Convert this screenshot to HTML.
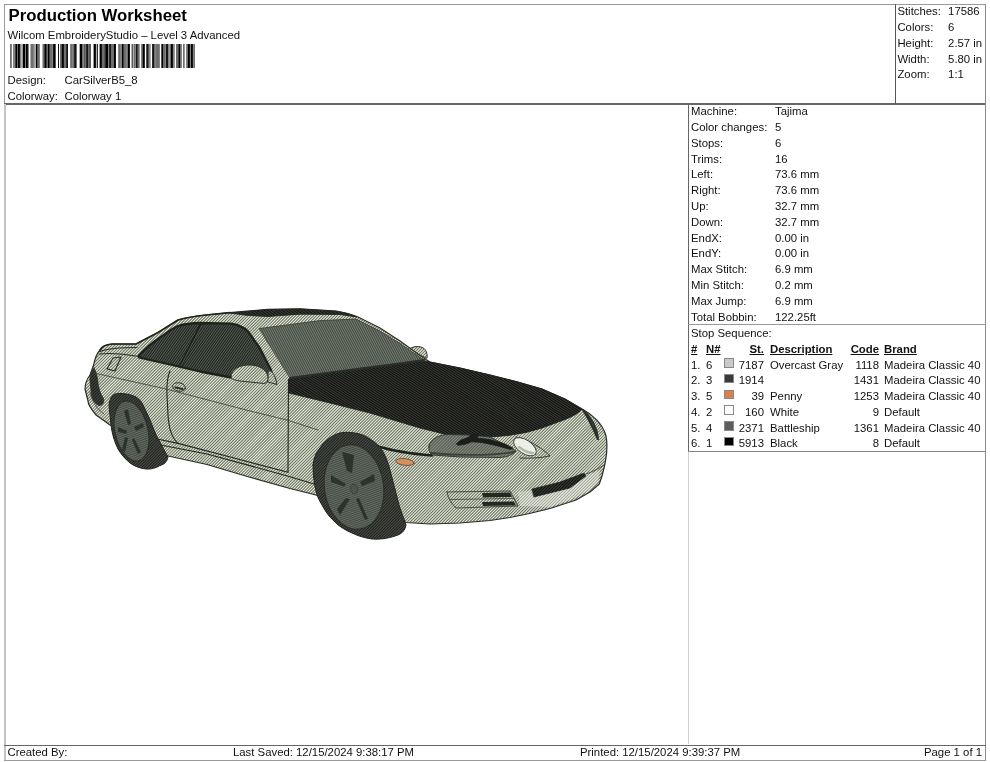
<!DOCTYPE html>
<html><head><meta charset="utf-8">
<style>
html,body{margin:0;padding:0;background:#fff;}
body{width:990px;height:762px;position:relative;overflow:hidden;font-family:"Liberation Sans",sans-serif;color:#111;font-size:11.35px;}
.ln{position:absolute;background:#777;}
.t{position:absolute;white-space:nowrap;line-height:14px;}
.r{text-align:right;}
h1{position:absolute;left:8.5px;top:6px;margin:0;font-size:16.75px;line-height:20px;font-weight:bold;color:#000;white-space:nowrap;}
.u{text-decoration:underline;font-weight:bold;}
.sw{position:absolute;width:10px;height:9.5px;border:1px solid #888;box-sizing:border-box;}
.bc{position:absolute;left:0;top:44px;height:23.5px;width:200px;}
.bc i{position:absolute;top:0;width:1px;height:23.5px;display:block;}
svg.car{position:absolute;left:0;top:0;}
</style></head><body>
<!-- frame lines -->
<div class="ln" style="left:4px;top:4px;width:982px;height:1px;background:#999"></div>
<div class="ln" style="left:4px;top:4px;width:1px;height:100px;background:#999"></div>
<div class="ln" style="left:4px;top:103px;width:982px;height:2px;background:#666"></div>
<div class="ln" style="left:895px;top:4px;width:1px;height:100px;background:#555"></div>
<div class="ln" style="left:985px;top:4px;width:1px;height:100px;background:#888"></div>
<div class="ln" style="left:4px;top:104px;width:2px;height:657px;background:#c4c4c4"></div>
<div class="ln" style="left:985px;top:104px;width:1px;height:657px;background:#8c8c8c"></div>
<div class="ln" style="left:688px;top:104px;width:1px;height:348px;background:#666"></div>
<div class="ln" style="left:688px;top:452px;width:1px;height:292px;background:#d0d0d0"></div>
<div class="ln" style="left:688px;top:324px;width:298px;height:1px;background:#999"></div>
<div class="ln" style="left:688px;top:451px;width:298px;height:1px;background:#888"></div>
<div class="ln" style="left:4px;top:744.5px;width:982px;height:1px;background:#666"></div>
<div class="ln" style="left:4px;top:760px;width:982px;height:1px;background:#999"></div>

<div id="tx" style="position:absolute;left:0;top:0;width:990px;height:762px;will-change:transform;">
<h1>Production Worksheet</h1>
<div class="t" style="left:7.5px;top:27.5px">Wilcom EmbroideryStudio – Level 3 Advanced</div>
<div class="bc"><i style="left:10px;background:rgb(110,110,110)"></i><i style="left:11px;background:rgb(132,132,132)"></i><i style="left:13px;background:rgb(132,132,132)"></i><i style="left:14px;background:rgb(132,132,132)"></i><i style="left:15px;background:rgb(66,66,66)"></i><i style="left:16px;background:rgb(0,0,0)"></i><i style="left:17px;background:rgb(110,110,110)"></i><i style="left:18px;background:rgb(0,0,0)"></i><i style="left:19px;background:rgb(22,22,22)"></i><i style="left:20px;background:rgb(132,132,132)"></i><i style="left:21px;background:rgb(176,176,176)"></i><i style="left:22px;background:rgb(154,154,154)"></i><i style="left:23px;background:rgb(0,0,0)"></i><i style="left:24px;background:rgb(0,0,0)"></i><i style="left:25px;background:rgb(132,132,132)"></i><i style="left:26px;background:rgb(0,0,0)"></i><i style="left:27px;background:rgb(22,22,22)"></i><i style="left:28px;background:rgb(132,132,132)"></i><i style="left:30px;background:rgb(176,176,176)"></i><i style="left:31px;background:rgb(110,110,110)"></i><i style="left:32px;background:rgb(110,110,110)"></i><i style="left:33px;background:rgb(132,132,132)"></i><i style="left:34px;background:rgb(154,154,154)"></i><i style="left:35px;background:rgb(176,176,176)"></i><i style="left:36px;background:rgb(0,0,0)"></i><i style="left:37px;background:rgb(88,88,88)"></i><i style="left:38px;background:rgb(110,110,110)"></i><i style="left:39px;background:rgb(132,132,132)"></i><i style="left:42px;background:rgb(176,176,176)"></i><i style="left:43px;background:rgb(110,110,110)"></i><i style="left:44px;background:rgb(66,66,66)"></i><i style="left:45px;background:rgb(0,0,0)"></i><i style="left:46px;background:rgb(66,66,66)"></i><i style="left:47px;background:rgb(110,110,110)"></i><i style="left:48px;background:rgb(0,0,0)"></i><i style="left:49px;background:rgb(66,66,66)"></i><i style="left:50px;background:rgb(110,110,110)"></i><i style="left:51px;background:rgb(110,110,110)"></i><i style="left:52px;background:rgb(132,132,132)"></i><i style="left:53px;background:rgb(22,22,22)"></i><i style="left:54px;background:rgb(0,0,0)"></i><i style="left:55px;background:rgb(88,88,88)"></i><i style="left:58px;background:rgb(22,22,22)"></i><i style="left:60px;background:rgb(110,110,110)"></i><i style="left:61px;background:rgb(88,88,88)"></i><i style="left:62px;background:rgb(0,0,0)"></i><i style="left:63px;background:rgb(22,22,22)"></i><i style="left:64px;background:rgb(110,110,110)"></i><i style="left:65px;background:rgb(110,110,110)"></i><i style="left:66px;background:rgb(44,44,44)"></i><i style="left:67px;background:rgb(22,22,22)"></i><i style="left:70px;background:rgb(132,132,132)"></i><i style="left:71px;background:rgb(110,110,110)"></i><i style="left:72px;background:rgb(132,132,132)"></i><i style="left:73px;background:rgb(110,110,110)"></i><i style="left:74px;background:rgb(44,44,44)"></i><i style="left:75px;background:rgb(22,22,22)"></i><i style="left:76px;background:rgb(110,110,110)"></i><i style="left:79px;background:rgb(176,176,176)"></i><i style="left:80px;background:rgb(0,0,0)"></i><i style="left:81px;background:rgb(0,0,0)"></i><i style="left:82px;background:rgb(110,110,110)"></i><i style="left:83px;background:rgb(132,132,132)"></i><i style="left:84px;background:rgb(88,88,88)"></i><i style="left:85px;background:rgb(110,110,110)"></i><i style="left:86px;background:rgb(44,44,44)"></i><i style="left:87px;background:rgb(22,22,22)"></i><i style="left:88px;background:rgb(110,110,110)"></i><i style="left:89px;background:rgb(88,88,88)"></i><i style="left:90px;background:rgb(88,88,88)"></i><i style="left:93px;background:rgb(154,154,154)"></i><i style="left:94px;background:rgb(0,0,0)"></i><i style="left:95px;background:rgb(22,22,22)"></i><i style="left:96px;background:rgb(176,176,176)"></i><i style="left:97px;background:rgb(44,44,44)"></i><i style="left:99px;background:rgb(154,154,154)"></i><i style="left:100px;background:rgb(0,0,0)"></i><i style="left:101px;background:rgb(22,22,22)"></i><i style="left:102px;background:rgb(110,110,110)"></i><i style="left:103px;background:rgb(110,110,110)"></i><i style="left:104px;background:rgb(88,88,88)"></i><i style="left:105px;background:rgb(44,44,44)"></i><i style="left:106px;background:rgb(0,0,0)"></i><i style="left:107px;background:rgb(0,0,0)"></i><i style="left:108px;background:rgb(132,132,132)"></i><i style="left:109px;background:rgb(44,44,44)"></i><i style="left:110px;background:rgb(22,22,22)"></i><i style="left:111px;background:rgb(110,110,110)"></i><i style="left:112px;background:rgb(110,110,110)"></i><i style="left:113px;background:rgb(110,110,110)"></i><i style="left:114px;background:rgb(0,0,0)"></i><i style="left:115px;background:rgb(22,22,22)"></i><i style="left:118px;background:rgb(132,132,132)"></i><i style="left:119px;background:rgb(110,110,110)"></i><i style="left:120px;background:rgb(132,132,132)"></i><i style="left:121px;background:rgb(132,132,132)"></i><i style="left:122px;background:rgb(0,0,0)"></i><i style="left:123px;background:rgb(66,66,66)"></i><i style="left:124px;background:rgb(110,110,110)"></i><i style="left:125px;background:rgb(110,110,110)"></i><i style="left:126px;background:rgb(132,132,132)"></i><i style="left:127px;background:rgb(110,110,110)"></i><i style="left:128px;background:rgb(0,0,0)"></i><i style="left:129px;background:rgb(22,22,22)"></i><i style="left:131px;background:rgb(176,176,176)"></i><i style="left:132px;background:rgb(88,88,88)"></i><i style="left:133px;background:rgb(176,176,176)"></i><i style="left:134px;background:rgb(110,110,110)"></i><i style="left:135px;background:rgb(132,132,132)"></i><i style="left:136px;background:rgb(22,22,22)"></i><i style="left:137px;background:rgb(66,66,66)"></i><i style="left:138px;background:rgb(110,110,110)"></i><i style="left:139px;background:rgb(154,154,154)"></i><i style="left:141px;background:rgb(132,132,132)"></i><i style="left:142px;background:rgb(88,88,88)"></i><i style="left:143px;background:rgb(0,0,0)"></i><i style="left:144px;background:rgb(44,44,44)"></i><i style="left:146px;background:rgb(88,88,88)"></i><i style="left:147px;background:rgb(22,22,22)"></i><i style="left:148px;background:rgb(88,88,88)"></i><i style="left:149px;background:rgb(132,132,132)"></i><i style="left:150px;background:rgb(176,176,176)"></i><i style="left:152px;background:rgb(44,44,44)"></i><i style="left:153px;background:rgb(22,22,22)"></i><i style="left:154px;background:rgb(110,110,110)"></i><i style="left:155px;background:rgb(132,132,132)"></i><i style="left:156px;background:rgb(110,110,110)"></i><i style="left:157px;background:rgb(110,110,110)"></i><i style="left:158px;background:rgb(110,110,110)"></i><i style="left:159px;background:rgb(132,132,132)"></i><i style="left:161px;background:rgb(88,88,88)"></i><i style="left:162px;background:rgb(0,0,0)"></i><i style="left:163px;background:rgb(110,110,110)"></i><i style="left:164px;background:rgb(110,110,110)"></i><i style="left:165px;background:rgb(132,132,132)"></i><i style="left:166px;background:rgb(22,22,22)"></i><i style="left:167px;background:rgb(22,22,22)"></i><i style="left:168px;background:rgb(132,132,132)"></i><i style="left:169px;background:rgb(154,154,154)"></i><i style="left:170px;background:rgb(110,110,110)"></i><i style="left:171px;background:rgb(0,0,0)"></i><i style="left:172px;background:rgb(22,22,22)"></i><i style="left:173px;background:rgb(132,132,132)"></i><i style="left:174px;background:rgb(154,154,154)"></i><i style="left:176px;background:rgb(110,110,110)"></i><i style="left:177px;background:rgb(110,110,110)"></i><i style="left:178px;background:rgb(66,66,66)"></i><i style="left:179px;background:rgb(0,0,0)"></i><i style="left:180px;background:rgb(110,110,110)"></i><i style="left:181px;background:rgb(132,132,132)"></i><i style="left:183px;background:rgb(110,110,110)"></i><i style="left:184px;background:rgb(154,154,154)"></i><i style="left:186px;background:rgb(132,132,132)"></i><i style="left:187px;background:rgb(110,110,110)"></i><i style="left:188px;background:rgb(0,0,0)"></i><i style="left:189px;background:rgb(22,22,22)"></i><i style="left:190px;background:rgb(132,132,132)"></i><i style="left:191px;background:rgb(0,0,0)"></i><i style="left:192px;background:rgb(22,22,22)"></i><i style="left:193px;background:rgb(132,132,132)"></i><i style="left:194px;background:rgb(110,110,110)"></i></div>
<div class="t" style="left:7.5px;top:72.5px">Design:</div>
<div class="t" style="left:64.5px;top:72.5px">CarSilverB5_8</div>
<div class="t" style="left:7.5px;top:88.5px">Colorway:</div>
<div class="t" style="left:64.5px;top:88.5px">Colorway 1</div>
<div class="t" style="left:897.4px;top:4.4px">Stitches:</div><div class="t" style="left:948.1px;top:4.4px">17586</div>
<div class="t" style="left:897.4px;top:20.1px">Colors:</div><div class="t" style="left:948.1px;top:20.1px">6</div>
<div class="t" style="left:897.4px;top:35.9px">Height:</div><div class="t" style="left:948.1px;top:35.9px">2.57 in</div>
<div class="t" style="left:897.4px;top:51.6px">Width:</div><div class="t" style="left:948.1px;top:51.6px">5.80 in</div>
<div class="t" style="left:897.4px;top:67.4px">Zoom:</div><div class="t" style="left:948.1px;top:67.4px">1:1</div>

<div class="t" style="left:691px;top:104.1px">Machine:</div><div class="t" style="left:775px;top:104.1px">Tajima</div>
<div class="t" style="left:691px;top:119.9px">Color changes:</div><div class="t" style="left:775px;top:119.9px">5</div>
<div class="t" style="left:691px;top:135.7px">Stops:</div><div class="t" style="left:775px;top:135.7px">6</div>
<div class="t" style="left:691px;top:151.5px">Trims:</div><div class="t" style="left:775px;top:151.5px">16</div>
<div class="t" style="left:691px;top:167.3px">Left:</div><div class="t" style="left:775px;top:167.3px">73.6 mm</div>
<div class="t" style="left:691px;top:183.1px">Right:</div><div class="t" style="left:775px;top:183.1px">73.6 mm</div>
<div class="t" style="left:691px;top:198.9px">Up:</div><div class="t" style="left:775px;top:198.9px">32.7 mm</div>
<div class="t" style="left:691px;top:214.7px">Down:</div><div class="t" style="left:775px;top:214.7px">32.7 mm</div>
<div class="t" style="left:691px;top:230.5px">EndX:</div><div class="t" style="left:775px;top:230.5px">0.00 in</div>
<div class="t" style="left:691px;top:246.3px">EndY:</div><div class="t" style="left:775px;top:246.3px">0.00 in</div>
<div class="t" style="left:691px;top:262.1px">Max Stitch:</div><div class="t" style="left:775px;top:262.1px">6.9 mm</div>
<div class="t" style="left:691px;top:277.9px">Min Stitch:</div><div class="t" style="left:775px;top:277.9px">0.2 mm</div>
<div class="t" style="left:691px;top:293.7px">Max Jump:</div><div class="t" style="left:775px;top:293.7px">6.9 mm</div>
<div class="t" style="left:691px;top:309.5px">Total Bobbin:</div><div class="t" style="left:775px;top:309.5px">122.25ft</div>

<div class="t" style="left:691px;top:326px">Stop Sequence:</div>
<div class="t u" style="left:691px;top:342px">#</div>
<div class="t u" style="left:706px;top:342px">N#</div>
<div class="t u r" style="left:700px;width:64px;top:342px">St.</div>
<div class="t u" style="left:770px;top:342px">Description</div>
<div class="t u r" style="left:820px;width:59px;top:342px">Code</div>
<div class="t u" style="left:884px;top:342px">Brand</div>
<div class="t" style="left:691px;top:357.5px">1.</div><div class="t" style="left:706px;top:357.5px">6</div><div class="sw" style="left:724.4px;top:358.0px;background:#c9c9c9"></div><div class="t r" style="left:700px;width:64px;top:357.5px">7187</div><div class="t" style="left:770px;top:357.5px">Overcast Gray</div><div class="t r" style="left:820px;width:59px;top:357.5px">1118</div><div class="t" style="left:884px;top:357.5px">Madeira Classic 40</div>
<div class="t" style="left:691px;top:373.2px">2.</div><div class="t" style="left:706px;top:373.2px">3</div><div class="sw" style="left:724.4px;top:373.8px;background:#3a3a3a"></div><div class="t r" style="left:700px;width:64px;top:373.2px">1914</div><div class="t" style="left:770px;top:373.2px"></div><div class="t r" style="left:820px;width:59px;top:373.2px">1431</div><div class="t" style="left:884px;top:373.2px">Madeira Classic 40</div>
<div class="t" style="left:691px;top:389.0px">3.</div><div class="t" style="left:706px;top:389.0px">5</div><div class="sw" style="left:724.4px;top:389.5px;background:#d9814e"></div><div class="t r" style="left:700px;width:64px;top:389.0px">39</div><div class="t" style="left:770px;top:389.0px">Penny</div><div class="t r" style="left:820px;width:59px;top:389.0px">1253</div><div class="t" style="left:884px;top:389.0px">Madeira Classic 40</div>
<div class="t" style="left:691px;top:404.8px">4.</div><div class="t" style="left:706px;top:404.8px">2</div><div class="sw" style="left:724.4px;top:405.2px;background:#ffffff"></div><div class="t r" style="left:700px;width:64px;top:404.8px">160</div><div class="t" style="left:770px;top:404.8px">White</div><div class="t r" style="left:820px;width:59px;top:404.8px">9</div><div class="t" style="left:884px;top:404.8px">Default</div>
<div class="t" style="left:691px;top:420.5px">5.</div><div class="t" style="left:706px;top:420.5px">4</div><div class="sw" style="left:724.4px;top:421.0px;background:#5e5e5e"></div><div class="t r" style="left:700px;width:64px;top:420.5px">2371</div><div class="t" style="left:770px;top:420.5px">Battleship</div><div class="t r" style="left:820px;width:59px;top:420.5px">1361</div><div class="t" style="left:884px;top:420.5px">Madeira Classic 40</div>
<div class="t" style="left:691px;top:436.2px">6.</div><div class="t" style="left:706px;top:436.2px">1</div><div class="sw" style="left:724.4px;top:436.8px;background:#000000"></div><div class="t r" style="left:700px;width:64px;top:436.2px">5913</div><div class="t" style="left:770px;top:436.2px">Black</div><div class="t r" style="left:820px;width:59px;top:436.2px">8</div><div class="t" style="left:884px;top:436.2px">Default</div>

<div class="t" style="left:7.5px;top:745px">Created By:</div>
<div class="t" style="left:233px;top:745px">Last Saved: 12/15/2024 9:38:17 PM</div>
<div class="t" style="left:580px;top:745px">Printed: 12/15/2024 9:39:37 PM</div>
<div class="t r" style="left:880px;width:102px;top:745px">Page 1 of 1</div>
</div>
<svg class="car" width="990" height="762" viewBox="0 0 990 762">
<defs>
<clipPath id="c1"><path d="M409,349.5 C412,346 420,345.5 424,348.5 C427,351 427.5,355 427,358 Z"/></clipPath>
<clipPath id="c2"><path d="M100,350 C102,346 106,344.5 112,344 L136,344 L158,332.5 L178,320 C186,317.5 196,316 206,315 L230,312.6 L268,309.4 L300,308.8 L336,311 C345,312.5 352,314.5 358,317 L380,328 L400,341 L418,354 L426,359.5 L430,362 L460,368 L490,375 L516,381.5 L542,389 L565,399 L582,409 C592,414 603,424 606,436 C608,446 606,462 602,476 L599.3,484 L590,492 L576,500 L550,508.5 L529.5,513.5 L510,517.5 L490,520.5 L460,523 L430,524 L406,522.5 L400,520 L314,494.5 L290,488.5 L249,477 L207,464.5 L168,456 L158,450 L110,425 L96,415 C91,409 88,405 88,401 L85,389 C85,384 87,379 90,375 L93.6,365 C95,358 97,353 100,350 Z"/></clipPath>
<clipPath id="c3"><path d="M230,313 L268,309.6 L300,309 L336,311.2 C345,312.6 352,314.6 357,317 L340,314.5 L300,314.2 L268,316.5 L248,315.5 Z"/></clipPath>
<clipPath id="c4"><path d="M94,368 C90.5,372 89.5,377 90,381 L91.5,395 C92.5,400 95,404 99,405.5 C102.5,405.5 104.5,402.5 103.5,398.5 C100,393 98.5,388 98,383 C97.5,378 96.5,372 94,368 Z"/></clipPath>
<clipPath id="c5"><path d="M139,355.5 C146,348 152,343 158,339 C165,334 171,329 178,326 C186,323.6 193,323.2 200,323 L231,323.6 C239,325 245,328 248,331.5 L260,348.5 L271,370 L273,378 L231.500,377.5 L200,371.5 L170,364.5 L139,357.5 Z"/></clipPath>
<clipPath id="c6"><path d="M259.4,328.5 L320,320.6 L356,319 L380,331 L400,343.5 L424,360 L400,363 L350,369.5 L290,377.5 Z"/></clipPath>
<clipPath id="c7"><path d="M289,379 L350,370.5 L400,364 L424,361 L430,362 L460,368 L490,375 L516,381.5 L542,389 L565,399 L582,409 C578,414 570,418 558,422 L542,428 L526,432.5 L508,435.5 L490,437 L470,437 L448,435 L420,428 L370,413 L330,403 L289,393 Z"/></clipPath>
<clipPath id="c8"><path d="M268.5,371 C272,370 275,374 277,384.5 L268,382 Z"/></clipPath>
<clipPath id="c9"><path d="M231,377 C231,369 240,365 249,365 C259,365 267,369.5 268,377 C268,381 267,383 264,383.5 L240,381 C234,380 231,379 231,377 Z"/></clipPath>
<clipPath id="c10"><path d="M429,446 C430,440 436,436 446,434.5 L470,435 L490,437 L504,444 L516,451 C512,455 508,457 500,457.5 L460,457 L432,455 C429,452 428.5,449 429,446 Z"/></clipPath>
<clipPath id="c11"><path d="M532,489 L560,482 L584,473 L586,476 L570,488 L534,497 Z"/></clipPath>
<clipPath id="c12"><path d="M109,405 C109.5,400 111,396.5 114,394.5 C118,392.5 130,393.5 136,397 C140,399.5 142.5,403 144,407 L150,420 L156,435 L168,457 C167,462 164,464.5 160,465.5 C156,468 151,469.5 146,469 C140,468.5 134,466 130,463 C125,459 121,454 118,449 C114,441 112,433 111,425 Z"/></clipPath>
<clipPath id="c13"><ellipse cx="131.5" cy="431" rx="16.5" ry="30.5" transform="rotate(-13 131.5 431)"/></clipPath>
<clipPath id="c14"><path d="M313,465 C314,458 316,452 320,448 C324,441 332,435 340,433 C346,431.5 358,432.5 365,436 C371,439 376,443 380,447 C385,454 388,462 390,470 L398,501 C400,510 404,518 406,525 C405,531 401,534.5 395,536 C388,538.5 380,539.5 372,539 C365,538 358,536 352,533 C346,530.5 340,527 336,523 C330,518 325,511 322,505 C319,500 317,496 316,491 C314,483 313,474 313,465 Z"/></clipPath>
<clipPath id="c15"><ellipse cx="354" cy="487" rx="29.5" ry="42.5" transform="rotate(-8 354 487)"/></clipPath>
</defs>
<g stroke-linejoin="round" stroke-linecap="round" fill="none">
<path d="M409,349.5 C412,346 420,345.5 424,348.5 C427,351 427.5,355 427,358 Z" fill="#e8eedd"/>
<path d="M407.0,345.2L408.7,343.5M407.0,348.2L411.7,343.5M407.0,351.1L414.6,343.5M407.0,354.1L417.6,343.5M407.0,357.1L420.6,343.5M407.0,360.0L423.5,343.5M410.0,360.0L426.5,343.5M413.0,360.0L429.5,343.5M415.9,360.0L429.5,346.4M418.9,360.0L429.5,349.4M421.9,360.0L429.5,352.4M424.8,360.0L429.5,355.3M427.8,360.0L429.5,358.3" clip-path="url(#c1)" stroke="#676d5d" stroke-width="1.02" stroke-linecap="butt"/>
<path d="M409,349.5 C412,346 420,345.5 424,348.5 C427,351 427.5,355 427,358 Z" stroke="#2e312c" stroke-width="1.0"/>
<path d="M100,350 C102,346 106,344.5 112,344 L136,344 L158,332.5 L178,320 C186,317.5 196,316 206,315 L230,312.6 L268,309.4 L300,308.8 L336,311 C345,312.5 352,314.5 358,317 L380,328 L400,341 L418,354 L426,359.5 L430,362 L460,368 L490,375 L516,381.5 L542,389 L565,399 L582,409 C592,414 603,424 606,436 C608,446 606,462 602,476 L599.3,484 L590,492 L576,500 L550,508.5 L529.5,513.5 L510,517.5 L490,520.5 L460,523 L430,524 L406,522.5 L400,520 L314,494.5 L290,488.5 L249,477 L207,464.5 L168,456 L158,450 L110,425 L96,415 C91,409 88,405 88,401 L85,389 C85,384 87,379 90,375 L93.6,365 C95,358 97,353 100,350 Z" fill="#e8eedd"/>
<path d="M83.0,308.7L84.9,306.8M83.0,311.6L87.8,306.8M83.0,314.6L90.8,306.8M83.0,317.6L93.8,306.8M83.0,320.5L96.7,306.8M83.0,323.5L99.7,306.8M83.0,326.5L102.7,306.8M83.0,329.5L105.7,306.8M83.0,332.4L108.6,306.8M83.0,335.4L111.6,306.8M83.0,338.4L114.6,306.8M83.0,341.3L117.5,306.8M83.0,344.3L120.5,306.8M83.0,347.3L123.5,306.8M83.0,350.2L126.4,306.8M83.0,353.2L129.4,306.8M83.0,356.2L132.4,306.8M83.0,359.2L135.4,306.8M83.0,362.1L138.3,306.8M83.0,365.1L141.3,306.8M83.0,368.1L144.3,306.8M83.0,371.0L147.2,306.8M83.0,374.0L150.2,306.8M83.0,377.0L153.2,306.8M83.0,379.9L156.1,306.8M83.0,382.9L159.1,306.8M83.0,385.9L162.1,306.8M83.0,388.9L165.1,306.8M83.0,391.8L168.0,306.8M83.0,394.8L171.0,306.8M83.0,397.8L174.0,306.8M83.0,400.7L176.9,306.8M83.0,403.7L179.9,306.8M83.0,406.7L182.9,306.8M83.0,409.6L185.8,306.8M83.0,412.6L188.8,306.8M83.0,415.6L191.8,306.8M83.0,418.6L194.8,306.8M83.0,421.5L197.7,306.8M83.0,424.5L200.7,306.8M83.0,427.5L203.7,306.8M83.0,430.4L206.6,306.8M83.0,433.4L209.6,306.8M83.0,436.4L212.6,306.8M83.0,439.3L215.5,306.8M83.0,442.3L218.5,306.8M83.0,445.3L221.5,306.8M83.0,448.3L224.5,306.8M83.0,451.2L227.4,306.8M83.0,454.2L230.4,306.8M83.0,457.2L233.4,306.8M83.0,460.1L236.3,306.8M83.0,463.1L239.3,306.8M83.0,466.1L242.3,306.8M83.0,469.0L245.2,306.8M83.0,472.0L248.2,306.8M83.0,475.0L251.2,306.8M83.0,478.0L254.2,306.8M83.0,480.9L257.1,306.8M83.0,483.9L260.1,306.8M83.0,486.9L263.1,306.8M83.0,489.8L266.0,306.8M83.0,492.8L269.0,306.8M83.0,495.8L272.0,306.8M83.0,498.7L274.9,306.8M83.0,501.7L277.9,306.8M83.0,504.7L280.9,306.8M83.0,507.6L283.8,306.8M83.0,510.6L286.8,306.8M83.0,513.6L289.8,306.8M83.0,516.6L292.8,306.8M83.0,519.5L295.7,306.8M83.0,522.5L298.7,306.8M83.0,525.5L301.7,306.8M85.4,526.0L304.6,306.8M88.4,526.0L307.6,306.8M91.4,526.0L310.6,306.8M94.3,526.0L313.5,306.8M97.3,526.0L316.5,306.8M100.3,526.0L319.5,306.8M103.3,526.0L322.5,306.8M106.2,526.0L325.4,306.8M109.2,526.0L328.4,306.8M112.2,526.0L331.4,306.8M115.1,526.0L334.3,306.8M118.1,526.0L337.3,306.8M121.1,526.0L340.3,306.8M124.0,526.0L343.2,306.8M127.0,526.0L346.2,306.8M130.0,526.0L349.2,306.8M133.0,526.0L352.2,306.8M135.9,526.0L355.1,306.8M138.9,526.0L358.1,306.8M141.9,526.0L361.1,306.8M144.8,526.0L364.0,306.8M147.8,526.0L367.0,306.8M150.8,526.0L370.0,306.8M153.7,526.0L372.9,306.8M156.7,526.0L375.9,306.8M159.7,526.0L378.9,306.8M162.7,526.0L381.9,306.8M165.6,526.0L384.8,306.8M168.6,526.0L387.8,306.8M171.6,526.0L390.8,306.8M174.5,526.0L393.7,306.8M177.5,526.0L396.7,306.8M180.5,526.0L399.7,306.8M183.4,526.0L402.6,306.8M186.4,526.0L405.6,306.8M189.4,526.0L408.6,306.8M192.4,526.0L411.6,306.8M195.3,526.0L414.5,306.8M198.3,526.0L417.5,306.8M201.3,526.0L420.5,306.8M204.2,526.0L423.4,306.8M207.2,526.0L426.4,306.8M210.2,526.0L429.4,306.8M213.1,526.0L432.3,306.8M216.1,526.0L435.3,306.8M219.1,526.0L438.3,306.8M222.1,526.0L441.3,306.8M225.0,526.0L444.2,306.8M228.0,526.0L447.2,306.8M231.0,526.0L450.2,306.8M233.9,526.0L453.1,306.8M236.9,526.0L456.1,306.8M239.9,526.0L459.1,306.8M242.8,526.0L462.0,306.8M245.8,526.0L465.0,306.8M248.8,526.0L468.0,306.8M251.7,526.0L470.9,306.8M254.7,526.0L473.9,306.8M257.7,526.0L476.9,306.8M260.7,526.0L479.9,306.8M263.6,526.0L482.8,306.8M266.6,526.0L485.8,306.8M269.6,526.0L488.8,306.8M272.5,526.0L491.7,306.8M275.5,526.0L494.7,306.8M278.5,526.0L497.7,306.8M281.4,526.0L500.6,306.8M284.4,526.0L503.6,306.8M287.4,526.0L506.6,306.8M290.4,526.0L509.6,306.8M293.3,526.0L512.5,306.8M296.3,526.0L515.5,306.8M299.3,526.0L518.5,306.8M302.2,526.0L521.4,306.8M305.2,526.0L524.4,306.8M308.2,526.0L527.4,306.8M311.1,526.0L530.3,306.8M314.1,526.0L533.3,306.8M317.1,526.0L536.3,306.8M320.1,526.0L539.3,306.8M323.0,526.0L542.2,306.8M326.0,526.0L545.2,306.8M329.0,526.0L548.2,306.8M331.9,526.0L551.1,306.8M334.9,526.0L554.1,306.8M337.9,526.0L557.1,306.8M340.8,526.0L560.0,306.8M343.8,526.0L563.0,306.8M346.8,526.0L566.0,306.8M349.8,526.0L569.0,306.8M352.7,526.0L571.9,306.8M355.7,526.0L574.9,306.8M358.7,526.0L577.9,306.8M361.6,526.0L580.8,306.8M364.6,526.0L583.8,306.8M367.6,526.0L586.8,306.8M370.5,526.0L589.7,306.8M373.5,526.0L592.7,306.8M376.5,526.0L595.7,306.8M379.5,526.0L598.7,306.8M382.4,526.0L601.6,306.8M385.4,526.0L604.6,306.8M388.4,526.0L607.6,306.8M391.3,526.0L610.0,307.3M394.3,526.0L610.0,310.3M397.3,526.0L610.0,313.3M400.2,526.0L610.0,316.2M403.2,526.0L610.0,319.2M406.2,526.0L610.0,322.2M409.2,526.0L610.0,325.2M412.1,526.0L610.0,328.1M415.1,526.0L610.0,331.1M418.1,526.0L610.0,334.1M421.0,526.0L610.0,337.0M424.0,526.0L610.0,340.0M427.0,526.0L610.0,343.0M429.9,526.0L610.0,345.9M432.9,526.0L610.0,348.9M435.9,526.0L610.0,351.9M438.8,526.0L610.0,354.8M441.8,526.0L610.0,357.8M444.8,526.0L610.0,360.8M447.8,526.0L610.0,363.8M450.7,526.0L610.0,366.7M453.7,526.0L610.0,369.7M456.7,526.0L610.0,372.7M459.6,526.0L610.0,375.6M462.6,526.0L610.0,378.6M465.6,526.0L610.0,381.6M468.5,526.0L610.0,384.5M471.5,526.0L610.0,387.5M474.5,526.0L610.0,390.5M477.5,526.0L610.0,393.5M480.4,526.0L610.0,396.4M483.4,526.0L610.0,399.4M486.4,526.0L610.0,402.4M489.3,526.0L610.0,405.3M492.3,526.0L610.0,408.3M495.3,526.0L610.0,411.3M498.2,526.0L610.0,414.2M501.2,526.0L610.0,417.2M504.2,526.0L610.0,420.2M507.2,526.0L610.0,423.2M510.1,526.0L610.0,426.1M513.1,526.0L610.0,429.1M516.1,526.0L610.0,432.1M519.0,526.0L610.0,435.0M522.0,526.0L610.0,438.0M525.0,526.0L610.0,441.0M527.9,526.0L610.0,443.9M530.9,526.0L610.0,446.9M533.9,526.0L610.0,449.9M536.9,526.0L610.0,452.9M539.8,526.0L610.0,455.8M542.8,526.0L610.0,458.8M545.8,526.0L610.0,461.8M548.7,526.0L610.0,464.7M551.7,526.0L610.0,467.7M554.7,526.0L610.0,470.7M557.6,526.0L610.0,473.6M560.6,526.0L610.0,476.6M563.6,526.0L610.0,479.6M566.6,526.0L610.0,482.6M569.5,526.0L610.0,485.5M572.5,526.0L610.0,488.5M575.5,526.0L610.0,491.5M578.4,526.0L610.0,494.4M581.4,526.0L610.0,497.4M584.4,526.0L610.0,500.4M587.3,526.0L610.0,503.3M590.3,526.0L610.0,506.3M593.3,526.0L610.0,509.3M596.3,526.0L610.0,512.3M599.2,526.0L610.0,515.2M602.2,526.0L610.0,518.2M605.2,526.0L610.0,521.2M608.1,526.0L610.0,524.1" clip-path="url(#c2)" stroke="#676d5d" stroke-width="1.02" stroke-linecap="butt"/>
<path d="M518,492 L532,490 L534,497 L570,488 L586,476 L600,470 L598,482 L590,490 L570,500 L550,507 L520,506 Z" fill="#f2f3ee" opacity="0.4" clip-path="url(#c2)" stroke="none"/>
<path d="M100,350 C102,346 106,344.5 112,344 L136,344 L158,332.5 L178,320 C186,317.5 196,316 206,315 L230,312.6 L268,309.4 L300,308.8 L336,311 C345,312.5 352,314.5 358,317 L380,328 L400,341 L418,354 L426,359.5 L430,362 L460,368 L490,375 L516,381.5 L542,389 L565,399 L582,409 C592,414 603,424 606,436 C608,446 606,462 602,476 L599.3,484 L590,492 L576,500 L550,508.5 L529.5,513.5 L510,517.5 L490,520.5 L460,523 L430,524 L406,522.5 L400,520 L314,494.5 L290,488.5 L249,477 L207,464.5 L168,456 L158,450 L110,425 L96,415 C91,409 88,405 88,401 L85,389 C85,384 87,379 90,375 L93.6,365 C95,358 97,353 100,350 Z" stroke="#2a2d27" stroke-width="1.2"/>
<path d="M230,313 L268,309.6 L300,309 L336,311.2 C345,312.6 352,314.6 357,317 L340,314.5 L300,314.2 L268,316.5 L248,315.5 Z" fill="#3a3d37"/>
<path d="M358.2,307.0L359.0,307.6M354.5,307.0L359.0,310.2M350.8,307.0L359.0,312.7M347.2,307.0L359.0,315.3M343.5,307.0L359.0,317.8M339.8,307.0L357.0,319.0M336.2,307.0L353.3,319.0M332.5,307.0L349.7,319.0M328.9,307.0L346.0,319.0M325.2,307.0L342.3,319.0M321.5,307.0L338.7,319.0M317.9,307.0L335.0,319.0M314.2,307.0L331.4,319.0M310.6,307.0L327.7,319.0M306.9,307.0L324.0,319.0M303.2,307.0L320.4,319.0M299.6,307.0L316.7,319.0M295.9,307.0L313.1,319.0M292.3,307.0L309.4,319.0M288.6,307.0L305.7,319.0M284.9,307.0L302.1,319.0M281.3,307.0L298.4,319.0M277.6,307.0L294.7,319.0M273.9,307.0L291.1,319.0M270.3,307.0L287.4,319.0M266.6,307.0L283.8,319.0M263.0,307.0L280.1,319.0M259.3,307.0L276.4,319.0M255.6,307.0L272.8,319.0M252.0,307.0L269.1,319.0M248.3,307.0L265.5,319.0M244.7,307.0L261.8,319.0M241.0,307.0L258.1,319.0M237.3,307.0L254.5,319.0M233.7,307.0L250.8,319.0M230.0,307.0L247.2,319.0M228.0,308.2L243.5,319.0M228.0,310.7L239.8,319.0M228.0,313.3L236.2,319.0M228.0,315.8L232.5,319.0M228.0,318.4L228.8,319.0" clip-path="url(#c3)" stroke="#141612" stroke-width="1.02" stroke-linecap="butt"/>
<path d="M230,313 L268,309.6 L300,309 L336,311.2 C345,312.6 352,314.6 357,317 L340,314.5 L300,314.2 L268,316.5 L248,315.5 Z" stroke="#22241f" stroke-width="0.8"/>
<path d="M94,368 C90.5,372 89.5,377 90,381 L91.5,395 C92.5,400 95,404 99,405.5 C102.5,405.5 104.5,402.5 103.5,398.5 C100,393 98.5,388 98,383 C97.5,378 96.5,372 94,368 Z" fill="#454941"/>
<path d="M87.5,366.6L88.1,366.0M87.5,369.5L91.0,366.0M87.5,372.5L94.0,366.0M87.5,375.5L97.0,366.0M87.5,378.4L99.9,366.0M87.5,381.4L102.9,366.0M87.5,384.4L105.9,366.0M87.5,387.3L106.5,368.3M87.5,390.3L106.5,371.3M87.5,393.3L106.5,374.3M87.5,396.2L106.5,377.2M87.5,399.2L106.5,380.2M87.5,402.2L106.5,383.2M87.5,405.2L106.5,386.2M88.1,407.5L106.5,389.1M91.1,407.5L106.5,392.1M94.1,407.5L106.5,395.1M97.0,407.5L106.5,398.0M100.0,407.5L106.5,401.0M103.0,407.5L106.5,404.0M105.9,407.5L106.5,406.9" clip-path="url(#c4)" stroke="#1b1d19" stroke-width="1.02" stroke-linecap="butt"/>
<path d="M94,368 C90.5,372 89.5,377 90,381 L91.5,395 C92.5,400 95,404 99,405.5 C102.5,405.5 104.5,402.5 103.5,398.5 C100,393 98.5,388 98,383 C97.5,378 96.5,372 94,368 Z" stroke="#2e312c" stroke-width="0.8"/>
<path d="M100,350 C102,346 106,344.5 112,344 L136,344 L158,332.5 L178,320 C186,317.5 196,316 206,315 L230,312.6" stroke="#23261f" stroke-width="1.6"/>
<path d="M100,351.5 C108,348.5 120,347.5 137,347.5" stroke="#2a2d27" stroke-width="1.1"/>
<path d="M99,354 C108,353 124,354 139,356.5" stroke="#2a2d27" stroke-width="1.1"/>
<path d="M113,358 L121,357 L115,371 L107,369 Z" stroke="#2a2d27" stroke-width="1.1"/>
<path d="M139,355.5 C146,348 152,343 158,339 C165,334 171,329 178,326 C186,323.6 193,323.2 200,323 L231,323.6 C239,325 245,328 248,331.5 L260,348.5 L271,370 L273,378 L231.500,377.5 L200,371.5 L170,364.5 L139,357.5 Z" fill="#535a52"/>
<path d="M137.0,323.5L138.8,321.0M137.0,327.0L141.2,321.0M137.0,330.5L143.6,321.0M137.0,334.0L146.1,321.0M137.0,337.5L148.5,321.0M137.0,340.9L151.0,321.0M137.0,344.4L153.4,321.0M137.0,347.9L155.9,321.0M137.0,351.4L158.3,321.0M137.0,354.9L160.7,321.0M137.0,358.4L163.2,321.0M137.0,361.9L165.6,321.0M137.0,365.4L168.1,321.0M137.0,368.8L170.5,321.0M137.0,372.3L172.9,321.0M137.0,375.8L175.4,321.0M137.0,379.3L177.8,321.0M139.0,380.0L180.3,321.0M141.4,380.0L182.7,321.0M143.8,380.0L185.1,321.0M146.3,380.0L187.6,321.0M148.7,380.0L190.0,321.0M151.2,380.0L192.5,321.0M153.6,380.0L194.9,321.0M156.0,380.0L197.4,321.0M158.5,380.0L199.8,321.0M160.9,380.0L202.2,321.0M163.4,380.0L204.7,321.0M165.8,380.0L207.1,321.0M168.3,380.0L209.6,321.0M170.7,380.0L212.0,321.0M173.1,380.0L214.4,321.0M175.6,380.0L216.9,321.0M178.0,380.0L219.3,321.0M180.5,380.0L221.8,321.0M182.9,380.0L224.2,321.0M185.3,380.0L226.7,321.0M187.8,380.0L229.1,321.0M190.2,380.0L231.5,321.0M192.7,380.0L234.0,321.0M195.1,380.0L236.4,321.0M197.6,380.0L238.9,321.0M200.0,380.0L241.3,321.0M202.4,380.0L243.7,321.0M204.9,380.0L246.2,321.0M207.3,380.0L248.6,321.0M209.8,380.0L251.1,321.0M212.2,380.0L253.5,321.0M214.6,380.0L256.0,321.0M217.1,380.0L258.4,321.0M219.5,380.0L260.8,321.0M222.0,380.0L263.3,321.0M224.4,380.0L265.7,321.0M226.9,380.0L268.2,321.0M229.3,380.0L270.6,321.0M231.7,380.0L273.0,321.0M234.2,380.0L275.0,321.7M236.6,380.0L275.0,325.2M239.1,380.0L275.0,328.7M241.5,380.0L275.0,332.2M243.9,380.0L275.0,335.6M246.4,380.0L275.0,339.1M248.8,380.0L275.0,342.6M251.3,380.0L275.0,346.1M253.7,380.0L275.0,349.6M256.1,380.0L275.0,353.1M258.6,380.0L275.0,356.6M261.0,380.0L275.0,360.1M263.5,380.0L275.0,363.5M265.9,380.0L275.0,367.0M268.4,380.0L275.0,370.5M270.8,380.0L275.0,374.0M273.2,380.0L275.0,377.5" clip-path="url(#c5)" stroke="#1f251e" stroke-width="1.02" stroke-linecap="butt"/>
<path d="M139,355.5 C146,348 152,343 158,339 C165,334 171,329 178,326 C186,323.6 193,323.2 200,323 L231,323.6 C239,325 245,328 248,331.5 L260,348.5 L271,370 L273,378 L231.500,377.5 L200,371.5 L170,364.5 L139,357.5 Z" stroke="#1f221c" stroke-width="2.3"/>
<path d="M201.5,324 L180.5,366.5" stroke="#1f221c" stroke-width="3.2"/>
<path d="M201.8,325.5 L181.2,365.5" stroke="#5b6056" stroke-width="0.9"/>
<path d="M259.4,328.5 L320,320.6 L356,319 L380,331 L400,343.5 L424,360 L400,363 L350,369.5 L290,377.5 Z" fill="#737c70"/>
<path d="M424.8,317.0L426.0,319.4M422.5,317.0L426.0,323.6M420.2,317.0L426.0,327.9M418.0,317.0L426.0,332.1M415.7,317.0L426.0,336.4M413.4,317.0L426.0,340.7M411.2,317.0L426.0,344.9M408.9,317.0L426.0,349.2M406.6,317.0L426.0,353.4M404.4,317.0L426.0,357.7M402.1,317.0L426.0,362.0M399.8,317.0L426.0,366.2M397.6,317.0L426.0,370.5M395.3,317.0L426.0,374.7M393.0,317.0L426.0,379.0M390.8,317.0L424.0,379.5M388.5,317.0L421.7,379.5M386.2,317.0L419.5,379.5M384.0,317.0L417.2,379.5M381.7,317.0L414.9,379.5M379.4,317.0L412.7,379.5M377.2,317.0L410.4,379.5M374.9,317.0L408.1,379.5M372.7,317.0L405.9,379.5M370.4,317.0L403.6,379.5M368.1,317.0L401.4,379.5M365.9,317.0L399.1,379.5M363.6,317.0L396.8,379.5M361.3,317.0L394.6,379.5M359.1,317.0L392.3,379.5M356.8,317.0L390.0,379.5M354.5,317.0L387.8,379.5M352.3,317.0L385.5,379.5M350.0,317.0L383.2,379.5M347.7,317.0L381.0,379.5M345.5,317.0L378.7,379.5M343.2,317.0L376.4,379.5M340.9,317.0L374.2,379.5M338.7,317.0L371.9,379.5M336.4,317.0L369.6,379.5M334.1,317.0L367.4,379.5M331.9,317.0L365.1,379.5M329.6,317.0L362.8,379.5M327.3,317.0L360.6,379.5M325.1,317.0L358.3,379.5M322.8,317.0L356.1,379.5M320.6,317.0L353.8,379.5M318.3,317.0L351.5,379.5M316.0,317.0L349.3,379.5M313.8,317.0L347.0,379.5M311.5,317.0L344.7,379.5M309.2,317.0L342.5,379.5M307.0,317.0L340.2,379.5M304.7,317.0L337.9,379.5M302.4,317.0L335.7,379.5M300.2,317.0L333.4,379.5M297.9,317.0L331.1,379.5M295.6,317.0L328.9,379.5M293.4,317.0L326.6,379.5M291.1,317.0L324.3,379.5M288.8,317.0L322.1,379.5M286.6,317.0L319.8,379.5M284.3,317.0L317.5,379.5M282.0,317.0L315.3,379.5M279.8,317.0L313.0,379.5M277.5,317.0L310.7,379.5M275.3,317.0L308.5,379.5M273.0,317.0L306.2,379.5M270.7,317.0L304.0,379.5M268.5,317.0L301.7,379.5M266.2,317.0L299.4,379.5M263.9,317.0L297.2,379.5M261.7,317.0L294.9,379.5M259.4,317.0L292.6,379.5M257.4,317.5L290.4,379.5M257.4,321.8L288.1,379.5M257.4,326.0L285.8,379.5M257.4,330.3L283.6,379.5M257.4,334.5L281.3,379.5M257.4,338.8L279.0,379.5M257.4,343.1L276.8,379.5M257.4,347.3L274.5,379.5M257.4,351.6L272.2,379.5M257.4,355.8L270.0,379.5M257.4,360.1L267.7,379.5M257.4,364.4L265.4,379.5M257.4,368.6L263.2,379.5M257.4,372.9L260.9,379.5M257.4,377.1L258.6,379.5" clip-path="url(#c6)" stroke="#444c42" stroke-width="1.02" stroke-linecap="butt"/>
<path d="M259.4,328.5 L320,320.6 L356,319 L380,331 L400,343.5 L424,360 L400,363 L350,369.5 L290,377.5 Z" stroke="#3a3e36" stroke-width="0.8"/>
<path d="M289,379 L350,370.5 L400,364 L424,361 L430,362 L460,368 L490,375 L516,381.5 L542,389 L565,399 L582,409 C578,414 570,418 558,422 L542,428 L526,432.5 L508,435.5 L490,437 L470,437 L448,435 L420,428 L370,413 L330,403 L289,393 Z" fill="#3b3d39"/>
<path d="M583.2,359.0L584.0,359.5M579.5,359.0L584.0,361.9M575.9,359.0L584.0,364.3M572.2,359.0L584.0,366.7M568.5,359.0L584.0,369.0M564.9,359.0L584.0,371.4M561.2,359.0L584.0,373.8M557.5,359.0L584.0,376.2M553.8,359.0L584.0,378.6M550.2,359.0L584.0,381.0M546.5,359.0L584.0,383.4M542.8,359.0L584.0,385.7M539.2,359.0L584.0,388.1M535.5,359.0L584.0,390.5M531.8,359.0L584.0,392.9M528.1,359.0L584.0,395.3M524.5,359.0L584.0,397.7M520.8,359.0L584.0,400.0M517.1,359.0L584.0,402.4M513.4,359.0L584.0,404.8M509.8,359.0L584.0,407.2M506.1,359.0L584.0,409.6M502.4,359.0L584.0,412.0M498.8,359.0L584.0,414.4M495.1,359.0L584.0,416.7M491.4,359.0L584.0,419.1M487.7,359.0L584.0,421.5M484.1,359.0L584.0,423.9M480.4,359.0L584.0,426.3M476.7,359.0L584.0,428.7M473.1,359.0L584.0,431.0M469.4,359.0L584.0,433.4M465.7,359.0L584.0,435.8M462.0,359.0L584.0,438.2M458.4,359.0L581.6,439.0M454.7,359.0L577.9,439.0M451.0,359.0L574.2,439.0M447.3,359.0L570.5,439.0M443.7,359.0L566.9,439.0M440.0,359.0L563.2,439.0M436.3,359.0L559.5,439.0M432.7,359.0L555.8,439.0M429.0,359.0L552.2,439.0M425.3,359.0L548.5,439.0M421.6,359.0L544.8,439.0M418.0,359.0L541.2,439.0M414.3,359.0L537.5,439.0M410.6,359.0L533.8,439.0M407.0,359.0L530.1,439.0M403.3,359.0L526.5,439.0M399.6,359.0L522.8,439.0M395.9,359.0L519.1,439.0M392.3,359.0L515.5,439.0M388.6,359.0L511.8,439.0M384.9,359.0L508.1,439.0M381.2,359.0L504.4,439.0M377.6,359.0L500.8,439.0M373.9,359.0L497.1,439.0M370.2,359.0L493.4,439.0M366.6,359.0L489.8,439.0M362.9,359.0L486.1,439.0M359.2,359.0L482.4,439.0M355.5,359.0L478.7,439.0M351.9,359.0L475.1,439.0M348.2,359.0L471.4,439.0M344.5,359.0L467.7,439.0M340.9,359.0L464.0,439.0M337.2,359.0L460.4,439.0M333.5,359.0L456.7,439.0M329.8,359.0L453.0,439.0M326.2,359.0L449.4,439.0M322.5,359.0L445.7,439.0M318.8,359.0L442.0,439.0M315.2,359.0L438.3,439.0M311.5,359.0L434.7,439.0M307.8,359.0L431.0,439.0M304.1,359.0L427.3,439.0M300.5,359.0L423.7,439.0M296.8,359.0L420.0,439.0M293.1,359.0L416.3,439.0M289.4,359.0L412.6,439.0M287.0,359.8L409.0,439.0M287.0,362.2L405.3,439.0M287.0,364.6L401.6,439.0M287.0,367.0L397.9,439.0M287.0,369.3L394.3,439.0M287.0,371.7L390.6,439.0M287.0,374.1L386.9,439.0M287.0,376.5L383.3,439.0M287.0,378.9L379.6,439.0M287.0,381.3L375.9,439.0M287.0,383.6L372.2,439.0M287.0,386.0L368.6,439.0M287.0,388.4L364.9,439.0M287.0,390.8L361.2,439.0M287.0,393.2L357.6,439.0M287.0,395.6L353.9,439.0M287.0,398.0L350.2,439.0M287.0,400.3L346.5,439.0M287.0,402.7L342.9,439.0M287.0,405.1L339.2,439.0M287.0,407.5L335.5,439.0M287.0,409.9L331.8,439.0M287.0,412.3L328.2,439.0M287.0,414.6L324.5,439.0M287.0,417.0L320.8,439.0M287.0,419.4L317.2,439.0M287.0,421.8L313.5,439.0M287.0,424.2L309.8,439.0M287.0,426.6L306.1,439.0M287.0,429.0L302.5,439.0M287.0,431.3L298.8,439.0M287.0,433.7L295.1,439.0M287.0,436.1L291.5,439.0M287.0,438.5L287.8,439.0" clip-path="url(#c7)" stroke="#0f100d" stroke-width="1.02" stroke-linecap="butt"/>
<path d="M289,379 L350,370.5 L400,364 L424,361 L430,362 L460,368 L490,375 L516,381.5 L542,389 L565,399 L582,409 C578,414 570,418 558,422 L542,428 L526,432.5 L508,435.5 L490,437 L470,437 L448,435 L420,428 L370,413 L330,403 L289,393 Z" stroke="#1f211d" stroke-width="0.8"/>
<path d="M290,378 L350,370 L400,363.5 L424,360.2" stroke="#2c2f28" stroke-width="2.2"/>

<path d="M268.5,371 C272,370 275,374 277,384.5 L268,382 Z" fill="#e8eedd"/>
<path d="M266.0,368.9L266.9,368.0M266.0,371.9L269.9,368.0M266.0,374.8L272.8,368.0M266.0,377.8L275.8,368.0M266.0,380.8L278.8,368.0M266.0,383.8L279.0,370.8M266.2,386.5L279.0,373.7M269.2,386.5L279.0,376.7M272.2,386.5L279.0,379.7M275.1,386.5L279.0,382.6M278.1,386.5L279.0,385.6" clip-path="url(#c8)" stroke="#676d5d" stroke-width="1.02" stroke-linecap="butt"/>
<path d="M268.5,371 C272,370 275,374 277,384.5 L268,382 Z" stroke="#2e312c" stroke-width="1.0"/>
<path d="M231,377 C231,369 240,365 249,365 C259,365 267,369.5 268,377 C268,381 267,383 264,383.5 L240,381 C234,380 231,379 231,377 Z" fill="#e8eedd"/>
<path d="M229.0,365.1L231.1,363.0M229.0,368.0L234.0,363.0M229.0,371.0L237.0,363.0M229.0,374.0L240.0,363.0M229.0,376.9L242.9,363.0M229.0,379.9L245.9,363.0M229.0,382.9L248.9,363.0M229.3,385.5L251.8,363.0M232.3,385.5L254.8,363.0M235.3,385.5L257.8,363.0M238.2,385.5L260.8,363.0M241.2,385.5L263.7,363.0M244.2,385.5L266.7,363.0M247.2,385.5L269.7,363.0M250.1,385.5L270.0,365.6M253.1,385.5L270.0,368.6M256.1,385.5L270.0,371.6M259.0,385.5L270.0,374.5M262.0,385.5L270.0,377.5M265.0,385.5L270.0,380.5M267.9,385.5L270.0,383.4" clip-path="url(#c9)" stroke="#676d5d" stroke-width="1.02" stroke-linecap="butt"/>
<path d="M231,377 C231,369 240,365 249,365 C259,365 267,369.5 268,377 C268,381 267,383 264,383.5 L240,381 C234,380 231,379 231,377 Z" stroke="#2e312c" stroke-width="1.0"/>
<path d="M170,371 C167,378 166.5,385 167,395 L168,415 C169,428 171,437 178,443.4" stroke="#23261f" stroke-width="1.1"/>
<path d="M288.5,379 L288,472.3" stroke="#23261f" stroke-width="1.1"/>
<path d="M158.5,439.2 L178,443.4 L235,458.3 L288,472.3" stroke="#23261f" stroke-width="1.1"/>
<path d="M158,444.5 L207,454 L249,465.4 L290,476.7 L314,484" stroke="#23261f" stroke-width="1.1"/>
<path d="M94,373 L166,389 L250,411 L287,420 L318,430" stroke="#3a3e36" stroke-width="0.8"/>
<ellipse cx="179" cy="387" rx="6.5" ry="4.2" transform="rotate(12 179 387)" stroke="#2e312c" stroke-width="0.9"/>
<path d="M175.5,387.5 L182.5,389" stroke="#2e312c" stroke-width="2"/>
<path d="M90,392 C92,402 97,409 104,414" stroke="#3a3e36" stroke-width="0.7"/>
<path d="M380,447 C395,451.5 415,454 432,455.5" stroke="#1f221c" stroke-width="2.6"/>
<path d="M429,446 C430,440 436,436 446,434.5 L470,435 L490,437 L504,444 L516,451 C512,455 508,457 500,457.5 L460,457 L432,455 C429,452 428.5,449 429,446 Z" fill="#868c80"/>
<path d="M426.5,435.3L429.3,432.5M426.5,438.3L432.3,432.5M426.5,441.3L435.3,432.5M426.5,444.2L438.2,432.5M426.5,447.2L441.2,432.5M426.5,450.2L444.2,432.5M426.5,453.1L447.1,432.5M426.5,456.1L450.1,432.5M426.5,459.1L453.1,432.5M429.1,459.5L456.1,432.5M432.0,459.5L459.0,432.5M435.0,459.5L462.0,432.5M438.0,459.5L465.0,432.5M440.9,459.5L467.9,432.5M443.9,459.5L470.9,432.5M446.9,459.5L473.9,432.5M449.8,459.5L476.8,432.5M452.8,459.5L479.8,432.5M455.8,459.5L482.8,432.5M458.8,459.5L485.8,432.5M461.7,459.5L488.7,432.5M464.7,459.5L491.7,432.5M467.7,459.5L494.7,432.5M470.6,459.5L497.6,432.5M473.6,459.5L500.6,432.5M476.6,459.5L503.6,432.5M479.5,459.5L506.5,432.5M482.5,459.5L509.5,432.5M485.5,459.5L512.5,432.5M488.4,459.5L515.4,432.5M491.4,459.5L518.0,432.9M494.4,459.5L518.0,435.9M497.4,459.5L518.0,438.9M500.3,459.5L518.0,441.8M503.3,459.5L518.0,444.8M506.3,459.5L518.0,447.8M509.2,459.5L518.0,450.7M512.2,459.5L518.0,453.7M515.2,459.5L518.0,456.7" clip-path="url(#c10)" stroke="#555b50" stroke-width="1.02" stroke-linecap="butt"/>
<path d="M429,446 C430,440 436,436 446,434.5 L470,435 L490,437 L504,444 L516,451 C512,455 508,457 500,457.5 L460,457 L432,455 C429,452 428.5,449 429,446 Z" stroke="#2e312c" stroke-width="0.9"/>
<path d="M431,453 C455,455.5 490,456 514,452" stroke="#3b4038" stroke-width="1.8"/>
<path d="M456.5,443.5 L461,440 L468,437.5 L471,434.5 L479,434.5 L477,438 L490,439.5 L505,444 L513,448 L510.5,449.5 L496,445.5 L482,442.5 L472,441.8 L465,444.3 L458,445.3 Z" fill="#1c1e1a" stroke="#1c1e1a" stroke-width="0.8"/>
<path d="M516,437 C528,439 542,448 550,456 C540,458 530,458.5 520,458" stroke="#2e312c" stroke-width="0.9"/>
<ellipse cx="525" cy="446.8" rx="13" ry="6.8" transform="rotate(34 525 446.8)" fill="#eceee8" stroke="#3a3e36" stroke-width="0.9"/>
<path d="M519,447 C524,451 529,453 533,453" stroke="#b4b9ae" stroke-width="2.5"/>
<path d="M583,410 C591,417 597,428 598,439 C594,430 589,419 583,410 Z" fill="#5c6157" stroke="#2b2e29" stroke-width="2.2"/>
<path d="M604,465 C598,469 592,472 586,474" stroke="#3a3e36" stroke-width="0.8"/>
<path d="M532,489 L560,482 L584,473 L586,476 L570,488 L534,497 Z" fill="#3b3d39"/>
<path d="M530.0,472.4L531.4,471.0M530.0,475.4L534.4,471.0M530.0,478.4L537.4,471.0M530.0,481.3L540.3,471.0M530.0,484.3L543.3,471.0M530.0,487.3L546.3,471.0M530.0,490.2L549.2,471.0M530.0,493.2L552.2,471.0M530.0,496.2L555.2,471.0M530.2,499.0L558.2,471.0M533.1,499.0L561.1,471.0M536.1,499.0L564.1,471.0M539.1,499.0L567.1,471.0M542.0,499.0L570.0,471.0M545.0,499.0L573.0,471.0M548.0,499.0L576.0,471.0M550.9,499.0L578.9,471.0M553.9,499.0L581.9,471.0M556.9,499.0L584.9,471.0M559.8,499.0L587.8,471.0M562.8,499.0L588.0,473.8M565.8,499.0L588.0,476.8M568.8,499.0L588.0,479.8M571.7,499.0L588.0,482.7M574.7,499.0L588.0,485.7M577.7,499.0L588.0,488.7M580.6,499.0L588.0,491.6M583.6,499.0L588.0,494.6M586.6,499.0L588.0,497.6" clip-path="url(#c11)" stroke="#0f100d" stroke-width="1.02" stroke-linecap="butt"/>
<path d="M532,489 L560,482 L584,473 L586,476 L570,488 L534,497 Z" stroke="#22241f" stroke-width="0.5"/>
<path d="M447,492 L510,491 L518,506 L456,508 C451,503 448,498 447,492 Z" stroke="#2e312c" stroke-width="0.8"/>
<path d="M450,499.5 L514,498.5" stroke="#2e312c" stroke-width="0.7"/>
<path d="M482,493 L510,492.5 L512,497 L483,497.5 Z" fill="#262822"/>
<path d="M482,502 L514,501.5 L516,505.5 L483,506 Z" fill="#262822"/>
<ellipse cx="405" cy="462" rx="9.3" ry="3.3" transform="rotate(7 405 462)" fill="#d6905c" stroke="#5a4a3a" stroke-width="0.8"/>
<path d="M109,405 C109.5,400 111,396.5 114,394.5 C118,392.5 130,393.5 136,397 C140,399.5 142.5,403 144,407 L150,420 L156,435 L168,457 C167,462 164,464.5 160,465.5 C156,468 151,469.5 146,469 C140,468.5 134,466 130,463 C125,459 121,454 118,449 C114,441 112,433 111,425 Z" fill="#4d514a"/>
<path d="M107.0,391.8L108.3,390.5M107.0,394.6L111.1,390.5M107.0,397.4L113.9,390.5M107.0,400.3L116.8,390.5M107.0,403.1L119.6,390.5M107.0,405.9L122.4,390.5M107.0,408.8L125.3,390.5M107.0,411.6L128.1,390.5M107.0,414.4L130.9,390.5M107.0,417.2L133.7,390.5M107.0,420.1L136.6,390.5M107.0,422.9L139.4,390.5M107.0,425.7L142.2,390.5M107.0,428.6L145.1,390.5M107.0,431.4L147.9,390.5M107.0,434.2L150.7,390.5M107.0,437.0L153.5,390.5M107.0,439.9L156.4,390.5M107.0,442.7L159.2,390.5M107.0,445.5L162.0,390.5M107.0,448.4L164.9,390.5M107.0,451.2L167.7,390.5M107.0,454.0L170.0,391.0M107.0,456.8L170.0,393.8M107.0,459.7L170.0,396.7M107.0,462.5L170.0,399.5M107.0,465.3L170.0,402.3M107.0,468.2L170.0,405.2M107.0,471.0L170.0,408.0M109.3,471.5L170.0,410.8M112.1,471.5L170.0,413.6M115.0,471.5L170.0,416.5M117.8,471.5L170.0,419.3M120.6,471.5L170.0,422.1M123.5,471.5L170.0,425.0M126.3,471.5L170.0,427.8M129.1,471.5L170.0,430.6M131.9,471.5L170.0,433.4M134.8,471.5L170.0,436.3M137.6,471.5L170.0,439.1M140.4,471.5L170.0,441.9M143.3,471.5L170.0,444.8M146.1,471.5L170.0,447.6M148.9,471.5L170.0,450.4M151.7,471.5L170.0,453.2M154.6,471.5L170.0,456.1M157.4,471.5L170.0,458.9M160.2,471.5L170.0,461.7M163.1,471.5L170.0,464.6M165.9,471.5L170.0,467.4M168.7,471.5L170.0,470.2" clip-path="url(#c12)" stroke="#1d1f1b" stroke-width="1.02" stroke-linecap="butt"/>
<path d="M109,405 C109.5,400 111,396.5 114,394.5 C118,392.5 130,393.5 136,397 C140,399.5 142.5,403 144,407 L150,420 L156,435 L168,457 C167,462 164,464.5 160,465.5 C156,468 151,469.5 146,469 C140,468.5 134,466 130,463 C125,459 121,454 118,449 C114,441 112,433 111,425 Z" stroke="#23251f" stroke-width="1"/>
<ellipse cx="131.5" cy="431" rx="16.5" ry="30.5" transform="rotate(-13 131.5 431)" fill="#646c64"/>
<path d="M108.0,399.3L111.6,398.0M108.0,401.4L117.4,398.0M108.0,403.6L123.3,398.0M108.0,405.7L129.1,398.0M108.0,407.8L135.0,398.0M108.0,409.9L140.8,398.0M108.0,412.1L146.6,398.0M108.0,414.2L152.5,398.0M108.0,416.3L156.0,398.9M108.0,418.5L156.0,401.0M108.0,420.6L156.0,403.1M108.0,422.7L156.0,405.2M108.0,424.8L156.0,407.4M108.0,427.0L156.0,409.5M108.0,429.1L156.0,411.6M108.0,431.2L156.0,413.8M108.0,433.4L156.0,415.9M108.0,435.5L156.0,418.0M108.0,437.6L156.0,420.1M108.0,439.7L156.0,422.3M108.0,441.9L156.0,424.4M108.0,444.0L156.0,426.5M108.0,446.1L156.0,428.6M108.0,448.2L156.0,430.8M108.0,450.4L156.0,432.9M108.0,452.5L156.0,435.0M108.0,454.6L156.0,437.2M108.0,456.8L156.0,439.3M108.0,458.9L156.0,441.4M108.0,461.0L156.0,443.5M108.0,463.1L156.0,445.7M111.5,464.0L156.0,447.8M117.4,464.0L156.0,449.9M123.2,464.0L156.0,452.1M129.0,464.0L156.0,454.2M134.9,464.0L156.0,456.3M140.7,464.0L156.0,458.4M146.6,464.0L156.0,460.6M152.4,464.0L156.0,462.7" clip-path="url(#c13)" stroke="#3f463f" stroke-width="0.9"/>
<ellipse cx="131.5" cy="431" rx="16.5" ry="30.5" transform="rotate(-13 131.5 431)" stroke="#2b2e29" stroke-width="1"/>
<g fill="#2f322c"><path d="M124,411 L128,409.5 L131,424 L128,425 Z"/><path d="M134,427 L143,423 L144,427 L136,431 Z"/><path d="M118,427 L127,431 L126,434 L118,432 Z"/><path d="M128,438 L125,452 L122,450 L125,437 Z"/><path d="M134,438 L141,452 L138,454 L132,440 Z"/></g>
<path d="M313,465 C314,458 316,452 320,448 C324,441 332,435 340,433 C346,431.5 358,432.5 365,436 C371,439 376,443 380,447 C385,454 388,462 390,470 L398,501 C400,510 404,518 406,525 C405,531 401,534.5 395,536 C388,538.5 380,539.5 372,539 C365,538 358,536 352,533 C346,530.5 340,527 336,523 C330,518 325,511 322,505 C319,500 317,496 316,491 C314,483 313,474 313,465 Z" fill="#4d514a"/>
<path d="M311.0,432.2L313.7,429.5M311.0,435.0L316.5,429.5M311.0,437.8L319.3,429.5M311.0,440.7L322.2,429.5M311.0,443.5L325.0,429.5M311.0,446.3L327.8,429.5M311.0,449.1L330.6,429.5M311.0,452.0L333.5,429.5M311.0,454.8L336.3,429.5M311.0,457.6L339.1,429.5M311.0,460.5L342.0,429.5M311.0,463.3L344.8,429.5M311.0,466.1L347.6,429.5M311.0,468.9L350.4,429.5M311.0,471.8L353.3,429.5M311.0,474.6L356.1,429.5M311.0,477.4L358.9,429.5M311.0,480.3L361.8,429.5M311.0,483.1L364.6,429.5M311.0,485.9L367.4,429.5M311.0,488.7L370.2,429.5M311.0,491.6L373.1,429.5M311.0,494.4L375.9,429.5M311.0,497.2L378.7,429.5M311.0,500.1L381.6,429.5M311.0,502.9L384.4,429.5M311.0,505.7L387.2,429.5M311.0,508.5L390.0,429.5M311.0,511.4L392.9,429.5M311.0,514.2L395.7,429.5M311.0,517.0L398.5,429.5M311.0,519.9L401.4,429.5M311.0,522.7L404.2,429.5M311.0,525.5L407.0,429.5M311.0,528.3L408.0,431.3M311.0,531.2L408.0,434.2M311.0,534.0L408.0,437.0M311.0,536.8L408.0,439.8M311.0,539.7L408.0,442.7M312.0,541.5L408.0,445.5M314.8,541.5L408.0,448.3M317.6,541.5L408.0,451.1M320.5,541.5L408.0,454.0M323.3,541.5L408.0,456.8M326.1,541.5L408.0,459.6M329.0,541.5L408.0,462.5M331.8,541.5L408.0,465.3M334.6,541.5L408.0,468.1M337.4,541.5L408.0,470.9M340.3,541.5L408.0,473.8M343.1,541.5L408.0,476.6M345.9,541.5L408.0,479.4M348.8,541.5L408.0,482.3M351.6,541.5L408.0,485.1M354.4,541.5L408.0,487.9M357.2,541.5L408.0,490.7M360.1,541.5L408.0,493.6M362.9,541.5L408.0,496.4M365.7,541.5L408.0,499.2M368.6,541.5L408.0,502.1M371.4,541.5L408.0,504.9M374.2,541.5L408.0,507.7M377.0,541.5L408.0,510.5M379.9,541.5L408.0,513.4M382.7,541.5L408.0,516.2M385.5,541.5L408.0,519.0M388.4,541.5L408.0,521.9M391.2,541.5L408.0,524.7M394.0,541.5L408.0,527.5M396.8,541.5L408.0,530.3M399.7,541.5L408.0,533.2M402.5,541.5L408.0,536.0M405.3,541.5L408.0,538.8" clip-path="url(#c14)" stroke="#1d1f1b" stroke-width="1.02" stroke-linecap="butt"/>
<path d="M313,465 C314,458 316,452 320,448 C324,441 332,435 340,433 C346,431.5 358,432.5 365,436 C371,439 376,443 380,447 C385,454 388,462 390,470 L398,501 C400,510 404,518 406,525 C405,531 401,534.5 395,536 C388,538.5 380,539.5 372,539 C365,538 358,536 352,533 C346,530.5 340,527 336,523 C330,518 325,511 322,505 C319,500 317,496 316,491 C314,483 313,474 313,465 Z" stroke="#23251f" stroke-width="1"/>
<ellipse cx="354" cy="487" rx="29.5" ry="42.5" transform="rotate(-8 354 487)" fill="#646c64"/>
<path d="M318.0,440.9L320.4,440.0M318.0,443.0L326.2,440.0M318.0,445.1L332.1,440.0M318.0,447.3L337.9,440.0M318.0,449.4L343.8,440.0M318.0,451.5L349.6,440.0M318.0,453.6L355.5,440.0M318.0,455.8L361.3,440.0M318.0,457.9L367.2,440.0M318.0,460.0L373.0,440.0M318.0,462.2L378.9,440.0M318.0,464.3L384.7,440.0M318.0,466.4L390.6,440.0M318.0,468.5L392.0,441.6M318.0,470.7L392.0,443.7M318.0,472.8L392.0,445.9M318.0,474.9L392.0,448.0M318.0,477.1L392.0,450.1M318.0,479.2L392.0,452.2M318.0,481.3L392.0,454.4M318.0,483.4L392.0,456.5M318.0,485.6L392.0,458.6M318.0,487.7L392.0,460.8M318.0,489.8L392.0,462.9M318.0,492.0L392.0,465.0M318.0,494.1L392.0,467.1M318.0,496.2L392.0,469.3M318.0,498.3L392.0,471.4M318.0,500.5L392.0,473.5M318.0,502.6L392.0,475.7M318.0,504.7L392.0,477.8M318.0,506.9L392.0,479.9M318.0,509.0L392.0,482.0M318.0,511.1L392.0,484.2M318.0,513.2L392.0,486.3M318.0,515.4L392.0,488.4M318.0,517.5L392.0,490.6M318.0,519.6L392.0,492.7M318.0,521.8L392.0,494.8M318.0,523.9L392.0,496.9M318.0,526.0L392.0,499.1M318.0,528.1L392.0,501.2M318.0,530.3L392.0,503.3M318.0,532.4L392.0,505.5M319.4,534.0L392.0,507.6M325.3,534.0L392.0,509.7M331.1,534.0L392.0,511.8M337.0,534.0L392.0,514.0M342.8,534.0L392.0,516.1M348.7,534.0L392.0,518.2M354.5,534.0L392.0,520.4M360.4,534.0L392.0,522.5M366.2,534.0L392.0,524.6M372.1,534.0L392.0,526.7M377.9,534.0L392.0,528.9M383.8,534.0L392.0,531.0M389.6,534.0L392.0,533.1" clip-path="url(#c15)" stroke="#3f463f" stroke-width="0.9"/>
<ellipse cx="354" cy="487" rx="29.5" ry="42.5" transform="rotate(-8 354 487)" stroke="#2b2e29" stroke-width="1"/>
<g fill="#2f322c"><path d="M342,452 L354,455 L352,473 L347,471 Z"/><path d="M360,482 L374,474 L375,481 L362,486 Z"/><path d="M331,475 L346,484 L344,486.5 L331,482 Z"/><path d="M350,499 L340,515 L337,509 L346,498 Z"/><path d="M359,498 L368,519 L365,520 L356,499 Z"/></g>
<ellipse cx="354" cy="489" rx="3.5" ry="5" transform="rotate(-8 354 489)" fill="#4f554e" stroke="#3a3e37" stroke-width="0.8"/>
</g>
</svg>

</body></html>
